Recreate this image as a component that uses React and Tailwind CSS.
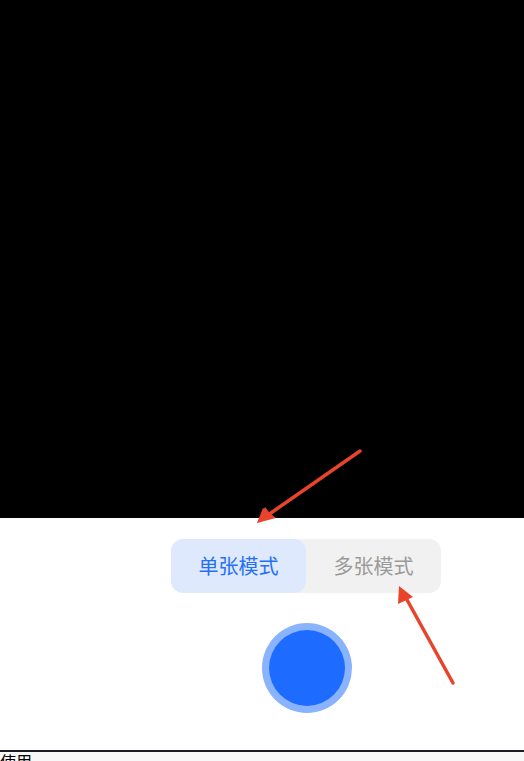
import React, { useState } from 'react';

const cjk = { fontFamily: '"Noto Sans CJK SC", "Noto Sans", sans-serif' };

const App = () => {
  const [mode, setMode] = useState("single");

  return (
    <div className="relative w-[524px] h-[761px] overflow-hidden bg-white" style={cjk}>
      {/* camera preview */}
      <div className="h-[518px] bg-black" />

      {/* controls */}
      <div className="h-[232px] flex flex-col items-center pt-[21px]">
        <div className="ml-[88px] flex w-[270px] h-[54px] rounded-xl bg-[#f1f1f1] overflow-hidden">
          <button
            onClick={() => setMode("single")}
            className={"w-[135px] h-full rounded-xl text-[20px] " + (mode === "single" ? "bg-[#dfe9fd] text-[#2470f5]" : "text-[#9a9a9a]")}
          >
            单张模式
          </button>
          <button
            onClick={() => setMode("multi")}
            className={"flex-1 h-full rounded-xl text-[20px] " + (mode === "multi" ? "bg-[#dfe9fd] text-[#2470f5]" : "text-[#9a9a9a]")}
          >
            多张模式
          </button>
        </div>
        <button className="mt-[30px] ml-[90px] w-[90px] h-[90px] rounded-full bg-[#8ab3fe] flex items-center justify-center">
          <span className="w-[76px] h-[76px] rounded-full bg-[#1e6cff]" />
        </button>
      </div>

      <div className="border-t-[2px] border-[#1c1c26] bg-[#f8f8f8] h-[11px]">
        <div className="text-[16px] leading-[20px] text-black -mt-[1px]">使用</div>
      </div>

      {/* annotation arrows */}
      <svg className="absolute inset-0 pointer-events-none" width="524" height="761">
        <line x1="360" y1="451" x2="268" y2="515" stroke="#e8432b" strokeWidth="3.5" strokeLinecap="round" />
        <polygon points="257,523 265,507 273,517" fill="#e8432b" />
        <polygon points="257,523 263,508 276,518" fill="#e8432b" />
        <line x1="453" y1="683" x2="406" y2="598" stroke="#e8432b" strokeWidth="3.5" strokeLinecap="round" />
        <polygon points="399,586 398,604 413,597" fill="#e8432b" />
      </svg>
    </div>
  );
};

export default App;
